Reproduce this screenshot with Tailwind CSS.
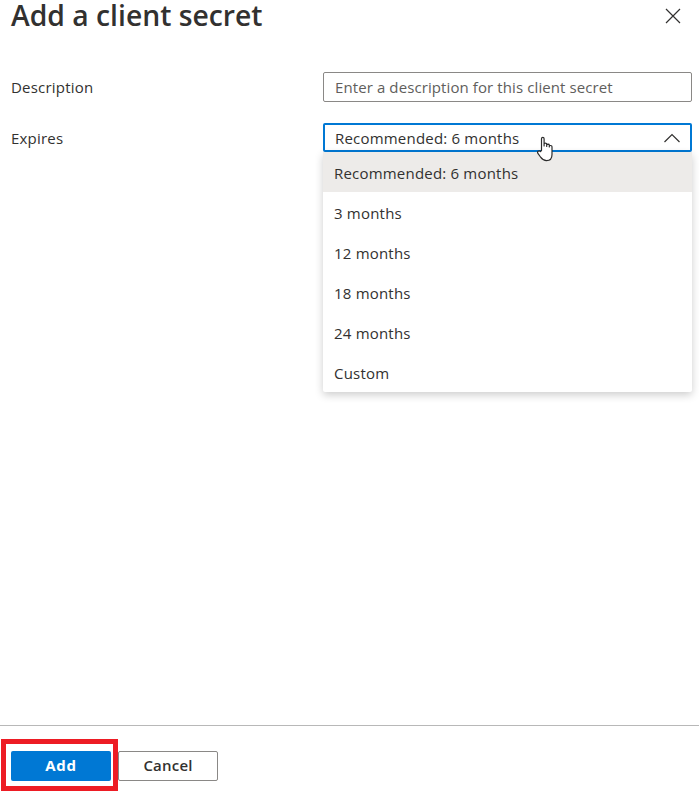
<!DOCTYPE html>
<html lang="en">
<head>
  <meta charset="UTF-8" />
  <title>Add a client secret</title>
  <script src="https://cdn.jsdelivr.net/npm/@tailwindcss/browser@4"></script>
</head>
<body class="bg-white h-[793px] overflow-hidden flex flex-col font-['Open_Sans',sans-serif] text-[#323130]">
  <!-- Header -->
  <header class="h-[72px] pl-[11px] pr-[18px] flex justify-between items-start">
    <h1 class="text-[28.3px] leading-[30px] font-semibold">Add a client secret</h1>
    <svg class="w-4 h-4 mt-[8px]" viewBox="0 0 16 16" fill="none" stroke="#323130" stroke-width="1.2"><path d="M1 1l14 14M15 1L1 15"/></svg>
  </header>

  <!-- Form -->
  <main class="flex-1 pl-[11px] pr-[7px] text-[15px] tracking-[0.2px]">
    <div class="flex items-center h-[30px] mb-[21px]">
      <label class="w-[312px] pt-px">Description</label>
      <div class="flex-1 h-full border border-[#8a8886] rounded-[2px] px-[11px] flex items-center text-[#605e5c] tracking-[0.1px]">Enter a description for this client secret</div>
    </div>
    <div class="flex items-center h-[29px]">
      <label class="w-[312px] pt-[2px]">Expires</label>
      <div class="relative flex-1 h-full">
        <div class="h-full border-2 border-[#0078d4] rounded-[2px] pl-[10px] pr-[10px] flex items-center justify-between">
          <span class="pt-[2px]">Recommended: 6 months</span>
          <svg class="w-4 h-[10px]" viewBox="0 0 16 10" fill="none" stroke="#323130" stroke-width="1.2"><path d="M0.5 9L8 1.5 15.5 9"/></svg>
        </div>
        <!-- Options -->
        <ul class="absolute left-0 right-0 top-[29px] bg-white rounded-b-[2px] shadow-[0_3px_8px_rgba(0,0,0,0.2)] z-10">
          <li class="h-10 px-[11px] pt-[2px] flex items-center bg-[#edebe9]">Recommended: 6 months</li>
          <li class="h-10 px-[11px] pt-[2px] flex items-center">3 months</li>
          <li class="h-10 px-[11px] pt-[2px] flex items-center">12 months</li>
          <li class="h-10 px-[11px] pt-[2px] flex items-center">18 months</li>
          <li class="h-10 px-[11px] pt-[2px] flex items-center">24 months</li>
          <li class="h-10 px-[11px] pt-[2px] flex items-center">Custom</li>
        </ul>
        <!-- Hand cursor -->
        <svg class="absolute left-[214px] top-[13px] w-[18px] h-[26px] z-20" viewBox="0 0 18 25" fill="#fff" stroke="#2b2b2b" stroke-width="1.2" stroke-linejoin="round"><path d="M4.5 14V2.2C4.5 .4 7.1 .4 7.1 2.2V9.5V7.5C7.1 6.2 9.7 6.2 9.7 7.5V10V8.5C9.7 7.4 12.3 7.4 12.3 8.5V10.5V9.8C12.3 8.7 15 8.7 15 10.2V18C15 21.5 13 24.2 9.5 24.2C6.2 24.2 5 22.5 3.5 20.5L.9 16.8C-.2 15.2 2 13.6 3.4 15Z"/></svg>
      </div>
    </div>
  </main>

  <!-- Footer -->
  <footer class="h-[68px] border-t border-[#b8b8b8] pl-[11px] pt-[25px] flex gap-[7px] items-start text-[15px] tracking-[0.2px] font-semibold">
    <div class="relative">
      <button class="w-[100px] h-[30px] bg-[#0078d4] text-white rounded-[2px] pb-[2px] tracking-[0.8px] font-bold">Add</button>
      <div class="absolute -left-[10px] -top-[12px] w-[117px] h-[52px] border-[5px] border-[#ed1c24]"></div>
    </div>
    <button class="w-[100px] h-[30px] border border-[#8a8886] rounded-[2px] pb-[2px]">Cancel</button>
  </footer>
</body>
</html>
